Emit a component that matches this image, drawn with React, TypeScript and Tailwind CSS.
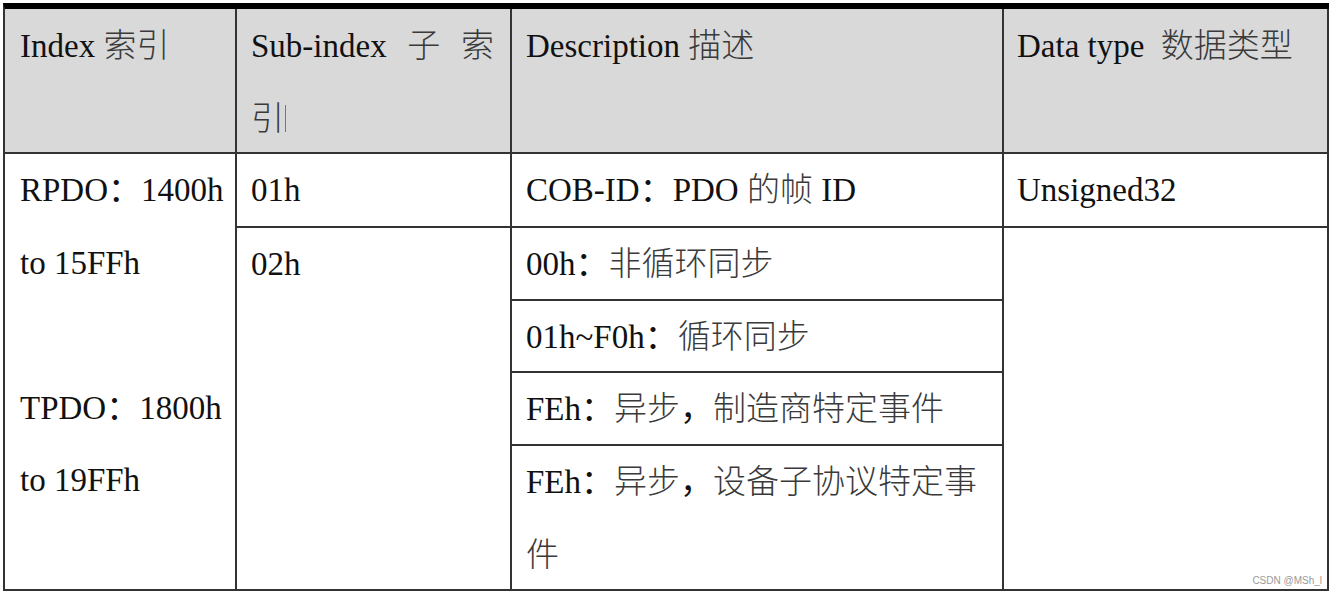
const cjk = /([\u4e00-\u9fff]+)/;

// grey, lighter ideographs like the Song face in the scan
function Txt({ s }: { s: string }) {
  return (
    <>
      {s.split(cjk).map((part, i) =>
        i % 2 === 1 ? (
          <span key={i} className="font-light text-[#3a3a3a]">
            {part}
          </span>
        ) : (
          part
        ),
      )}
    </>
  );
}

const cell = "border-r-2 border-b-2 border-[#333] whitespace-nowrap";
const head = cell + " bg-[#d9d9d9] pt-px";

export default function App() {
  return (
    <div className="min-h-screen bg-white pt-[3px] pl-[3px]">
      <div className="grid w-[1326px] grid-cols-[232px_275px_492px_325px] grid-rows-[145px_74px_73px_72px_73px_145px] border-t-[6px] border-l-2 border-t-black border-l-[#333] font-['Liberation_Serif','Noto_Sans_CJK_SC',serif] text-[33px] leading-[72.5px] text-[#111]">
        <div className={head + " pl-[15px]"}>
          <Txt s="Index 索引" />
        </div>
        <div className={head + " pl-[14px] pr-[16px]"}>
          <div className="flex justify-between">
            <span>Sub-index</span>
            <Txt s="子" />
            <Txt s="索" />
          </div>
          <div className="flex items-center">
            <Txt s="引" />
            <span className="ml-px inline-block h-[27px] w-px bg-[#777]" />
          </div>
        </div>
        <div className={head + " pl-[14px]"}>
          <Txt s="Description 描述" />
        </div>
        <div className={head + " pl-[13px]"}>
          <Txt s={"Data type\u00a0\u00a0数据类型"} />
        </div>

        <div className={cell + " col-start-1 row-start-2 row-span-5 pl-[15px]"}>
          <div>
            <Txt s="RPDO：1400h" />
          </div>
          <div>to 15FFh</div>
          <div className="h-[72.5px]" />
          <div>
            <Txt s="TPDO：1800h" />
          </div>
          <div>to 19FFh</div>
        </div>
        <div className={cell + " col-start-2 row-start-2 pl-[14px]"}>01h</div>
        <div className={cell + " col-start-3 row-start-2 pl-[14px]"}>
          <Txt s="COB-ID：PDO 的帧 ID" />
        </div>
        <div className={cell + " col-start-4 row-start-2 pl-[13px]"}>Unsigned32</div>

        <div className={cell + " col-start-2 row-start-3 row-span-4 pl-[14px]"}>02h</div>
        <div className={cell + " col-start-3 row-start-3 pl-[14px]"}>
          <Txt s="00h：非循环同步" />
        </div>
        <div className={cell + " col-start-3 row-start-4 pl-[14px]"}>
          <Txt s="01h~F0h：循环同步" />
        </div>
        <div className={cell + " col-start-3 row-start-5 pl-[14px]"}>
          <Txt s="FEh：异步，制造商特定事件" />
        </div>
        <div className={cell + " col-start-3 row-start-6 pl-[14px]"}>
          <div>
            <Txt s="FEh：异步，设备子协议特定事" />
          </div>
          <div>
            <Txt s="件" />
          </div>
        </div>
        <div className={cell + " col-start-4 row-start-3 row-span-4 flex items-end justify-end pr-[5px] pb-[3px]"}>
          <span className="font-['Liberation_Sans',sans-serif] text-[10px] leading-none text-[#9a9a9a]">
            CSDN @MSh_l
          </span>
        </div>
      </div>
    </div>
  );
}
